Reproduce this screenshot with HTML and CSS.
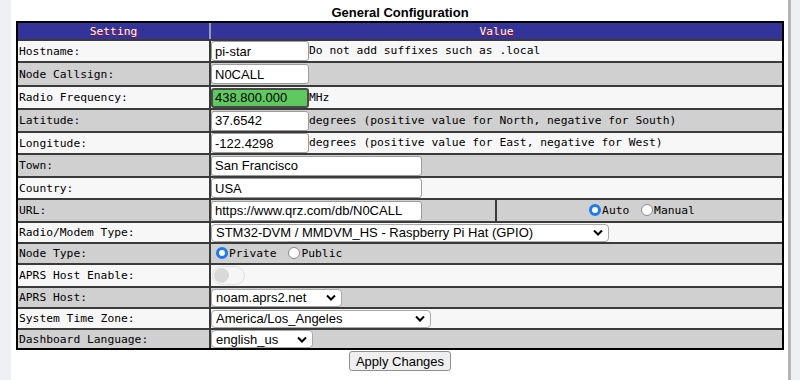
FILE: index.html
```html
<!DOCTYPE html>
<html>
<head>
<meta charset="utf-8">
<title>General Configuration</title>
<link rel="stylesheet" href="styles.css">
</head>
<body>
<div class="page">
  <div class="content">
    <div class="title">General Configuration</div>
    <table class="cfg">
      <colgroup><col class="c1"><col class="c2"><col class="c3"></colgroup>
      <tr class="hdr"><th>Setting</th><th colspan="2" class="vh">Value</th></tr>
      <tr class="h22"><td class="lbl">Hostname:</td><td colspan="2" class="val"><input class="txt w98" value="pi-star">Do not add suffixes such as .local</td></tr>
      <tr class="h24"><td class="lbl">Node Callsign:</td><td colspan="2" class="val"><input class="txt w98" value="N0CALL"></td></tr>
      <tr class="h23"><td class="lbl">Radio Frequency:</td><td colspan="2" class="val"><input class="txt w98 freq" value="438.800.000">MHz</td></tr>
      <tr class="h23"><td class="lbl">Latitude:</td><td colspan="2" class="val"><input class="txt w98" value="37.6542">degrees (positive value for North, negative for South)</td></tr>
      <tr class="h22"><td class="lbl">Longitude:</td><td colspan="2" class="val"><input class="txt w98" value="-122.4298">degrees (positive value for East, negative for West)</td></tr>
      <tr class="h23"><td class="lbl">Town:</td><td colspan="2" class="val"><input class="txt w211" value="San Francisco"></td></tr>
      <tr class="h22"><td class="lbl">Country:</td><td colspan="2" class="val"><input class="txt w211" value="USA"></td></tr>
      <tr class="h23"><td class="lbl">URL:</td><td class="val"><input class="txt w211" value="https://www.qrz.com/db/N0CALL"></td><td class="val center"><label class="opt"><input type="radio" class="rad" name="url" checked>Auto</label> <label class="opt"><input type="radio" class="rad" name="url">Manual</label></td></tr>
      <tr class="h21"><td class="lbl">Radio/Modem Type:</td><td colspan="2" class="val"><select class="sel w398"><option>STM32-DVM / MMDVM_HS - Raspberry Pi Hat (GPIO)</option></select></td></tr>
      <tr class="h21"><td class="lbl">Node Type:</td><td colspan="2" class="val"><label class="opt"><input type="radio" class="rad" name="nt" checked>Private</label> <label class="opt"><input type="radio" class="rad" name="nt">Public</label></td></tr>
      <tr class="h23"><td class="lbl">APRS Host Enable:</td><td colspan="2" class="val"><span class="tog"></span></td></tr>
      <tr class="h21"><td class="lbl">APRS Host:</td><td colspan="2" class="val"><select class="sel w131"><option>noam.aprs2.net</option></select></td></tr>
      <tr class="h21"><td class="lbl">System Time Zone:</td><td colspan="2" class="val"><select class="sel w220"><option>America/Los_Angeles</option></select></td></tr>
      <tr class="h20"><td class="lbl">Dashboard Language:</td><td colspan="2" class="val"><select class="sel w102"><option>english_us</option></select></td></tr>
    </table>
    <div class="actions"><button class="apply">Apply Changes</button></div>
  </div>
</div>
</body>
</html>
```
FILE: styles.css
```css
html, body {
  margin: 0;
  padding: 0;
}
body {
  background: #eef0f4;
  font-family: "DejaVu Sans Mono", "Liberation Mono", monospace;
  font-size: 11.3px;
  color: #000;
}
.page {
  margin-left: 11px;
  width: 777px;
  height: 380px;
  background: #fff;
  border-right: 3px solid #b4b4b4;
}
.content {
  padding: 0 4px 0 5px;
}
.title {
  height: 21px;
  box-sizing: border-box;
  padding-top: 6px;
  line-height: 13px;
  text-align: center;
  font-family: "Liberation Sans", Arial, sans-serif;
  font-weight: bold;
  font-size: 13px;
}
.cfg {
  width: 768px;
  table-layout: fixed;
  border: 2px solid #000;
  border-spacing: 0;
  font-size: 11.3px;
}
.c1 { width: 191px; }
.c2 { width: 286px; }
.c3 { width: 287px; }
.cfg th {
  height: 16px;
  padding: 0;
  background: #333399;
  color: #fff;
  font-weight: normal;
  text-shadow: 0.6px 0.6px 0 #b00000;
}
.cfg th.vh {
  border-left: 2px solid #9a9ab8;
}
.cfg td {
  padding: 0;
  border-top: 2px solid #3a3a3a;
  white-space: nowrap;
  vertical-align: middle;
}
.cfg tr:nth-child(even) { background: #f7f7f7; }
.cfg tr:nth-child(odd) { background: #d0d0d0; }
.cfg td.lbl { padding-left: 1px; }
.cfg td.val { border-left: 2px solid #3a3a3a; }
.cfg td.center { text-align: center; }
.h20 { height: 20px; }
.h21 { height: 21px; }
.h22 { height: 22px; }
.h23 { height: 23px; }
.h24 { height: 24px; }
.txt {
  box-sizing: border-box;
  height: 20px;
  margin: 0;
  padding: 0 3px;
  border: 1px solid #9c9c9c;
  border-radius: 3px;
  background: #fff;
  font-family: "Liberation Sans", Arial, sans-serif;
  font-size: 13px;
  color: #000;
  vertical-align: middle;
}
.w98 { width: 98px; }
.w211 { width: 211px; }
.freq {
  background: #5fc95f;
  border: 2px solid #4a4a4a;
  padding: 0 2px;
}
.sel {
  -webkit-appearance: none;
  appearance: none;
  box-sizing: border-box;
  height: 18px;
  margin: 0;
  padding: 0 20px 0 4px;
  border: 1px solid #a8a8a8;
  border-radius: 4px;
  background: #fff url("data:image/svg+xml;utf8,<svg xmlns='http://www.w3.org/2000/svg' width='10' height='7'><path d='M1 1.5l4 4 4-4' fill='none' stroke='black' stroke-width='2'/></svg>") no-repeat right 5px center;
  font-family: "Liberation Sans", Arial, sans-serif;
  font-size: 13px;
  color: #000;
  vertical-align: middle;
}
.w398 { width: 398px; }
.w131 { width: 131px; }
.w220 { width: 220px; }
.w102 { width: 102px; }
.opt {
  white-space: nowrap;
}
.rad {
  -webkit-appearance: none;
  appearance: none;
  box-sizing: border-box;
  width: 12px;
  height: 12px;
  margin: 0 1px 0 5px;
  border: 1px solid #8a8a8a;
  border-radius: 50%;
  background: #fff;
  vertical-align: -2px;
}
.rad:checked {
  border: 3.5px solid #1f7bf0;
  background: #fff;
}
.tog {
  display: inline-block;
  position: relative;
  box-sizing: border-box;
  width: 33px;
  height: 19px;
  margin-left: 1px;
  border: 1px solid #e2e2e2;
  border-radius: 10px;
  background: #f6f6f6;
  vertical-align: middle;
}
.tog::before {
  content: "";
  position: absolute;
  left: 1px;
  top: 1px;
  width: 15px;
  height: 15px;
  border-radius: 50%;
  background: #d9d9d9;
}
.actions {
  text-align: center;
  padding-top: 1px;
}
.apply {
  height: 20px;
  margin: 0;
  padding: 0 6px;
  border: 1px solid #8f8f8f;
  border-radius: 3px;
  background: #efefef;
  font-family: "Liberation Sans", Arial, sans-serif;
  font-size: 13px;
  color: #000;
}
```
